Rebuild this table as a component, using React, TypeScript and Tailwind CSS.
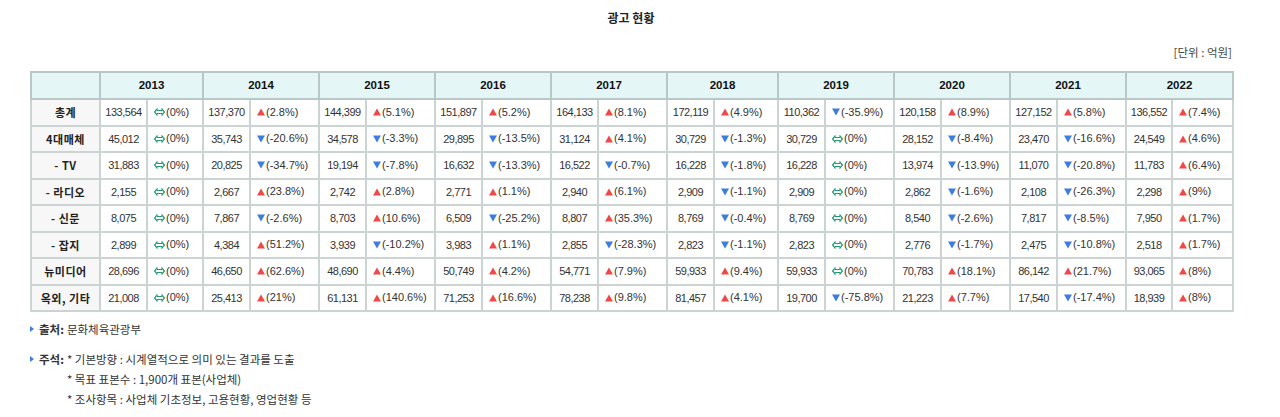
import { Fragment } from "react";

const years = ["2013", "2014", "2015", "2016", "2017", "2018", "2019", "2020", "2021", "2022"];

// [금액, 증감률] 순서로 연도별 값
const rows: { label: string; cells: [string, string][] }[] = [
  {
    label: "총계",
    cells: [["133,564", "0"], ["137,370", "2.8"], ["144,399", "5.1"], ["151,897", "5.2"], ["164,133", "8.1"], ["172,119", "4.9"], ["110,362", "-35.9"], ["120,158", "8.9"], ["127,152", "5.8"], ["136,552", "7.4"]],
  },
  {
    label: "4대매체",
    cells: [["45,012", "0"], ["35,743", "-20.6"], ["34,578", "-3.3"], ["29,895", "-13.5"], ["31,124", "4.1"], ["30,729", "-1.3"], ["30,729", "0"], ["28,152", "-8.4"], ["23,470", "-16.6"], ["24,549", "4.6"]],
  },
  {
    label: "- TV",
    cells: [["31,883", "0"], ["20,825", "-34.7"], ["19,194", "-7.8"], ["16,632", "-13.3"], ["16,522", "-0.7"], ["16,228", "-1.8"], ["16,228", "0"], ["13,974", "-13.9"], ["11,070", "-20.8"], ["11,783", "6.4"]],
  },
  {
    label: "- 라디오",
    cells: [["2,155", "0"], ["2,667", "23.8"], ["2,742", "2.8"], ["2,771", "1.1"], ["2,940", "6.1"], ["2,909", "-1.1"], ["2,909", "0"], ["2,862", "-1.6"], ["2,108", "-26.3"], ["2,298", "9"]],
  },
  {
    label: "- 신문",
    cells: [["8,075", "0"], ["7,867", "-2.6"], ["8,703", "10.6"], ["6,509", "-25.2"], ["8,807", "35.3"], ["8,769", "-0.4"], ["8,769", "0"], ["8,540", "-2.6"], ["7,817", "-8.5"], ["7,950", "1.7"]],
  },
  {
    label: "- 잡지",
    cells: [["2,899", "0"], ["4,384", "51.2"], ["3,939", "-10.2"], ["3,983", "1.1"], ["2,855", "-28.3"], ["2,823", "-1.1"], ["2,823", "0"], ["2,776", "-1.7"], ["2,475", "-10.8"], ["2,518", "1.7"]],
  },
  {
    label: "뉴미디어",
    cells: [["28,696", "0"], ["46,650", "62.6"], ["48,690", "4.4"], ["50,749", "4.2"], ["54,771", "7.9"], ["59,933", "9.4"], ["59,933", "0"], ["70,783", "18.1"], ["86,142", "21.7"], ["93,065", "8"]],
  },
  {
    label: "옥외, 기타",
    cells: [["21,008", "0"], ["25,413", "21"], ["61,131", "140.6"], ["71,253", "16.6"], ["78,238", "9.8"], ["81,457", "4.1"], ["19,700", "-75.8"], ["21,223", "7.7"], ["17,540", "-17.4"], ["18,939", "8"]],
  },
];

const colWidths = [
  "w-[69px]",
  "w-[47px]", "w-[56px]",
  "w-[47px]", "w-[69px]",
  "w-[47px]", "w-[69px]",
  "w-[47px]", "w-[69px]",
  "w-[47px]", "w-[69px]",
  "w-[47px]", "w-[64px]",
  "w-[47px]", "w-[69px]",
  "w-[47px]", "w-[69px]",
  "w-[47px]", "w-[69px]",
  "w-[46px]", "w-[61px]",
];

function Change({ value }: { value: string }) {
  if (value === "0") {
    return (
      <span className="inline-flex items-center">
        <svg width="11" height="8" viewBox="0 0 11 8" className="mr-[1px]">
          <path d="M3 2.5 H8 M3 5.5 H8" stroke="#1f9a74" strokeWidth="1.1" fill="none" />
          <path d="M3.5 0.5 L0.6 4 L3.5 7.5 M7.5 0.5 L10.4 4 L7.5 7.5" stroke="#1f9a74" strokeWidth="1.2" fill="none" />
        </svg>
        (0%)
      </span>
    );
  }
  const down = value.startsWith("-");
  return (
    <span className="inline-flex items-center">
      {down ? (
        <svg width="8" height="8" viewBox="0 0 8 8" className="mr-[1px]">
          <path d="M0 0.5 H8 L4 7.5 Z" fill="#3b7ee0" />
        </svg>
      ) : (
        <svg width="8" height="8" viewBox="0 0 8 8" className="mr-[1px]">
          <path d="M4 0.5 L8 7.5 H0 Z" fill="#f04848" />
        </svg>
      )}
      ({value}%)
    </span>
  );
}

function Bullet() {
  return (
    <svg width="4" height="6" viewBox="0 0 4 6" className="shrink-0 mt-[7px] mr-[5px]">
      <path d="M0 0 L4 3 L0 6 Z" fill="#3d7fd6" />
    </svg>
  );
}

export default function App() {
  return (
    <div className="min-h-screen bg-white">
      <div className="ml-[30px] w-[1202px] pt-[10px] font-['Liberation_Sans','Noto_Sans_CJK_KR',sans-serif] text-[#333]">
        <h1 className="text-center text-[12px] font-bold leading-[16px] text-[#222] font-['Noto_Sans_CJK_KR',sans-serif]">
          광고 현황
        </h1>
        <div className="mt-[18px] text-right text-[11.5px] leading-[16px] text-[#444] font-['Noto_Sans_CJK_KR',sans-serif]">
          [단위 : 억원]
        </div>

        <table className="mt-[11px] w-[1202px] table-fixed border-collapse border-2 border-[#b3c1c1] text-[11px]">
          <colgroup>
            {colWidths.map((w, i) => (
              <col key={i} className={w} />
            ))}
          </colgroup>
          <thead>
            <tr className="h-[27px] bg-[#e4f6f6]">
              <th className="border-2 border-[#b9c7c7]"></th>
              {years.map((y) => (
                <th key={y} colSpan={2} className="border-2 border-[#b9c7c7] text-[11.5px] font-bold text-[#111]">
                  {y}
                </th>
              ))}
            </tr>
          </thead>
          <tbody>
            {rows.map((r) => (
              <tr key={r.label} className="h-[26.5px]">
                <td className="border-2 border-[#cbd3d3] bg-[#f7f7f7] text-center font-bold text-[11px] text-[#222] font-['Noto_Sans_CJK_KR',sans-serif] whitespace-nowrap tracking-[0.5px]">
                  {r.label}
                </td>
                {r.cells.map(([num, chg], i) => (
                  <Fragment key={i}>
                    <td className="border-2 border-[#cbd3d3] text-center tracking-[-0.5px] whitespace-nowrap">
                      {num}
                    </td>
                    <td className="border-2 border-[#cbd3d3] pl-[6px] whitespace-nowrap">
                      <Change value={chg} />
                    </td>
                  </Fragment>
                ))}
              </tr>
            ))}
          </tbody>
        </table>

        <div className="mt-[7px] text-[11.5px] leading-[20px] text-[#333] font-['Noto_Sans_CJK_KR',sans-serif]">
          <div className="flex items-start">
            <Bullet />
            <span className="font-bold mr-[3px]">출처:</span>
            <span>문화체육관광부</span>
          </div>
          <div className="mt-[10px] flex items-start">
            <Bullet />
            <span className="font-bold mr-[3px]">주석:</span>
            <div className="flex flex-col">
              <span>* 기본방향 : 시계열적으로 의미 있는 결과를 도출</span>
              <span>* 목표 표본수 : 1,900개 표본(사업체)</span>
              <span>* 조사항목 : 사업체 기초정보, 고용현황, 영업현황 등</span>
            </div>
          </div>
        </div>
      </div>
    </div>
  );
}
